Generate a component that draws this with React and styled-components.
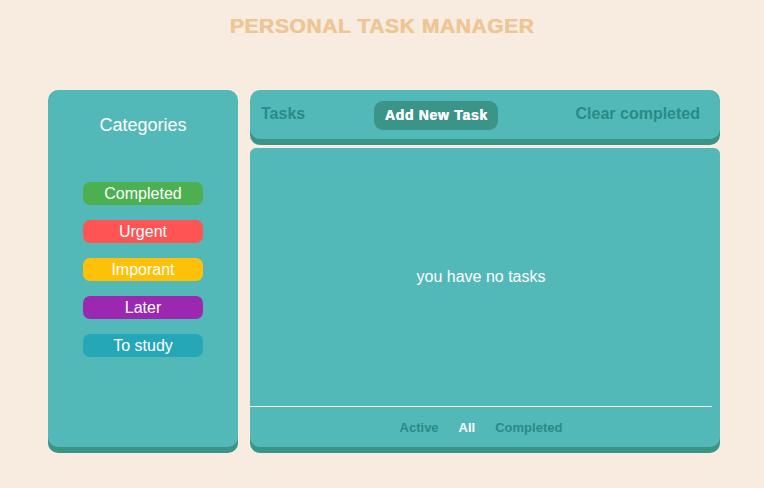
import React from 'react';
import styled, { createGlobalStyle } from 'styled-components';

const GlobalStyle = createGlobalStyle`
  body {
    margin: 0;
    background: #f8ebdf;
    font-family: 'Liberation Sans', Arial, sans-serif;
  }
`;

const Page = styled.div`
  width: 764px;
  height: 488px;
  box-sizing: border-box;
`;

const Title = styled.h1`
  margin: 0;
  padding-top: 14px;
  height: 90px;
  box-sizing: border-box;
  text-align: center;
  font-size: 21px;
  font-weight: bold;
  color: #eec694;
  letter-spacing: 0.6px;
  text-shadow: 0.5px 0 0 #eec694;
`;

const Board = styled.div`
  display: flex;
  align-items: flex-start;
  gap: 12px;
  padding-left: 48px;
`;

const Panel = styled.div`
  background: #53b9b8;
  border-radius: 10px;
  box-shadow: 0 6px 0 #3b9488;
`;

const Sidebar = styled(Panel)`
  width: 190px;
  height: 357px;
  display: flex;
  flex-direction: column;
  align-items: center;
`;

const SideTitle = styled.div`
  margin-top: 25px;
  height: 20px;
  line-height: 20px;
  font-size: 18px;
  color: #fff;
  margin-bottom: 47px;
`;

const CategoryList = styled.div`
  display: flex;
  flex-direction: column;
  gap: 15px;
`;

const Category = styled.div`
  width: 120px;
  height: 23px;
  line-height: 23px;
  border-radius: 7px;
  background: ${(p) => p.color};
  color: #fff;
  text-align: center;
  font-size: 16px;
`;

const MainColumn = styled.div`
  width: 470px;
  display: flex;
  flex-direction: column;
`;

const Header = styled(Panel)`
  height: 49px;
  display: flex;
  align-items: center;
  padding: 0 20px 0 11px;
  box-sizing: border-box;
`;

const HeaderText = styled.div`
  font-size: 16px;
  font-weight: bold;
  color: #2b8a88;
  margin-top: -2px;
`;

const AddButton = styled.button`
  margin-left: 69px;
  height: 29px;
  width: 124px;
  border: none;
  border-radius: 9px;
  background: #3b9488;
  color: #fff;
  font-family: 'Liberation Sans', Arial, sans-serif;
  font-size: 14px;
  font-weight: bold;
  letter-spacing: 0.7px;
  text-shadow: 0.5px 0 0 #fff;
  padding: 0;
  margin-top: 1px;
`;

const ClearButton = styled(HeaderText)`
  margin-left: auto;
`;

const Content = styled(Panel)`
  margin-top: 9px;
  height: 299px;
  display: flex;
  flex-direction: column;
  border-radius: 6px 6px 10px 10px;
`;

const Empty = styled.div`
  flex: 1;
  margin-right: 8px;
  display: flex;
  align-items: center;
  justify-content: center;
  color: #fff;
  font-size: 16px;
  border-bottom: 1px solid #fff;
`;

const Filters = styled.div`
  height: 40px;
  margin-right: 8px;
  display: flex;
  align-items: center;
  justify-content: center;
  gap: 20px;
`;

const Filter = styled.span`
  font-size: 13px;
  font-weight: bold;
  color: ${(p) => (p.active ? '#fff' : '#2b8a88')};
`;

const categories = [
  { name: 'Completed', color: '#4cb050' },
  { name: 'Urgent', color: '#ff5454' },
  { name: 'Imporant', color: '#ffc107' },
  { name: 'Later', color: '#9c27b0' },
  { name: 'To study', color: '#26a7b7' },
];

const App = () => {
  return (
    <Page>
      <GlobalStyle />
      <Title>PERSONAL TASK MANAGER</Title>
      <Board>
        <Sidebar>
          <SideTitle>Categories</SideTitle>
          <CategoryList>
            {categories.map((c) => (
              <Category key={c.name} color={c.color}>
                {c.name}
              </Category>
            ))}
          </CategoryList>
        </Sidebar>
        <MainColumn>
          <Header>
            <HeaderText>Tasks</HeaderText>
            <AddButton>Add New Task</AddButton>
            <ClearButton>Clear completed</ClearButton>
          </Header>
          <Content>
            <Empty>you have no tasks</Empty>
            <Filters>
              <Filter>Active</Filter>
              <Filter active>All</Filter>
              <Filter>Completed</Filter>
            </Filters>
          </Content>
        </MainColumn>
      </Board>
    </Page>
  );
};

export default App;
